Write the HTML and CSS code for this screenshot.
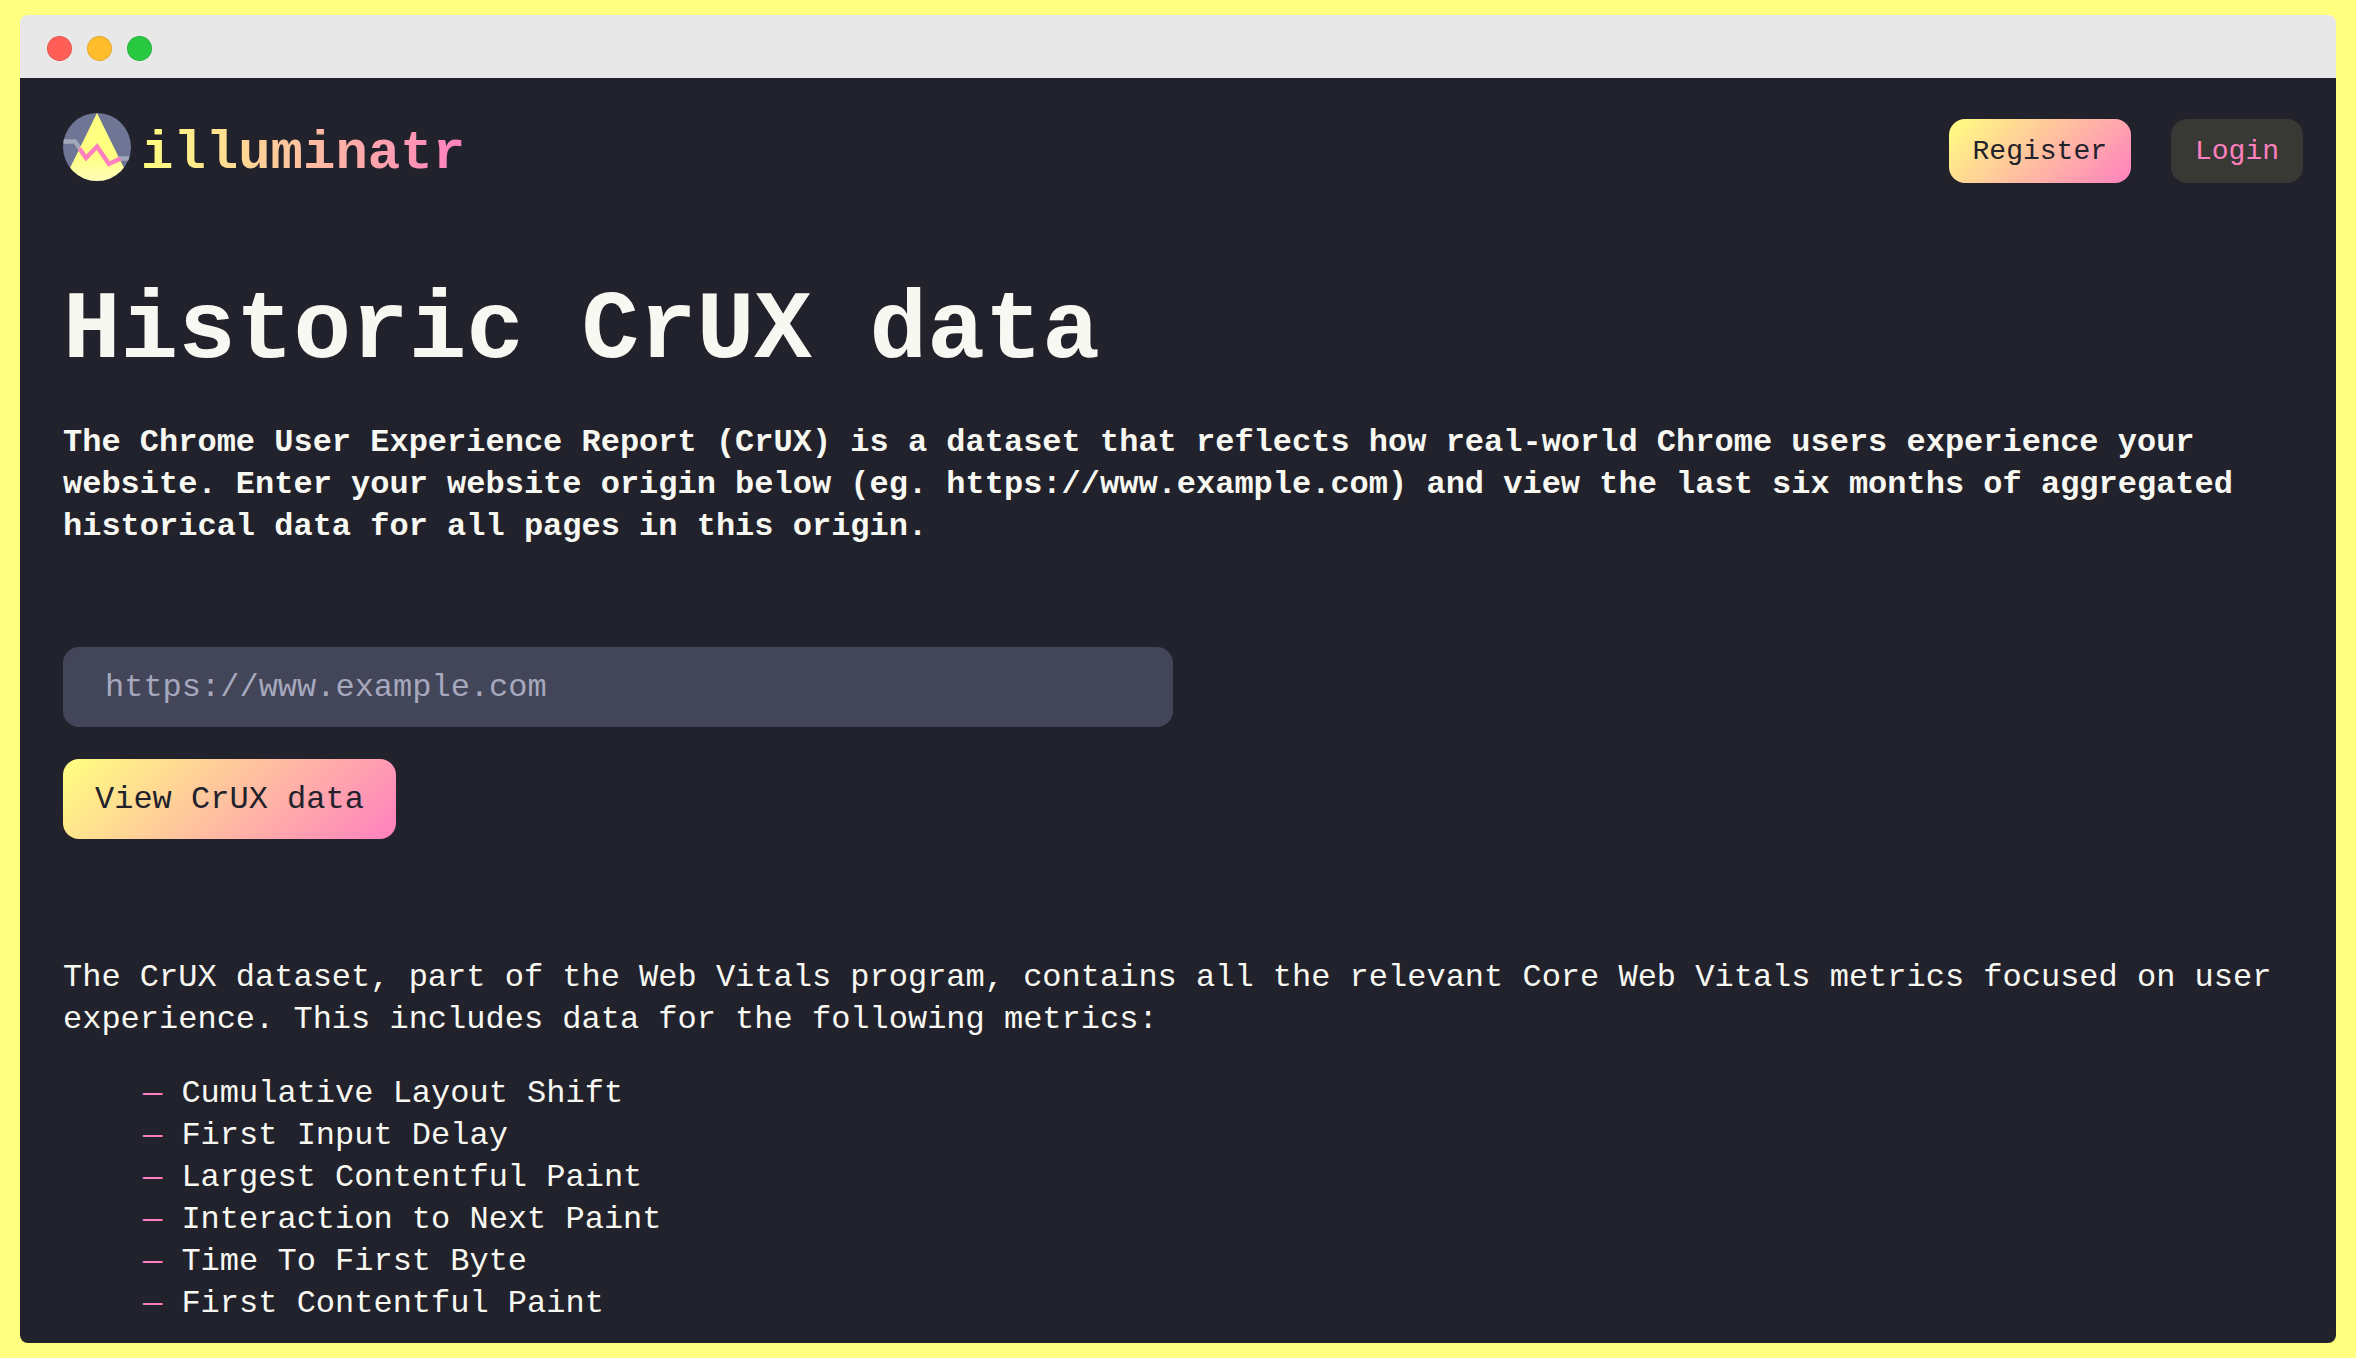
FILE: index.html
```
<!DOCTYPE html>
<html lang="en">
	<head>
		<meta charset="utf-8">
		<meta name="viewport" content="width=device-width, initial-scale=1">
		<title>illuminatr</title>
		<link rel="stylesheet" href="styles.css">
	</head>

	<body>
		<div class="window">
			<div class="titlebar">
				<span class="dot red"></span>
				<span class="dot orange"></span>
				<span class="dot green"></span>
			</div>

			<div class="page">
				<header class="header">
					<a class="brand" href="#">
						<svg class="logo" viewBox="0 0 68 68" aria-hidden="true">
							<defs>
								<clipPath id="disc"><circle cx="34" cy="34" r="34"/></clipPath>
								<linearGradient id="beam" x1="0" y1="0" x2="0" y2="1">
									<stop offset="0.6" stop-color="#ffff80"/>
									<stop offset="1" stop-color="#ffffb8"/>
								</linearGradient>
							</defs>
							<g clip-path="url(#disc)" fill="none" stroke-width="4.5">
								<rect width="68" height="68" fill="#6f7594"/>
								<path d="M0 28.5H12L18 37M56 45.5H68" stroke="#a3a7ba"/>
								<path d="M34 0L67.4 68H.6z" fill="url(#beam)"/>
								<path d="M16.5 35.5L23 45L34 33.5L46 51L57.5 45.5" stroke="#ff80bf"/>
							</g>
						</svg>
						<span class="name">illuminatr</span>
					</a>
					<nav class="nav">
						<a class="btn primary" href="#">Register</a>
						<a class="btn login" href="#">Login</a>
					</nav>
				</header>

				<main>
					<h1>Historic CrUX data</h1>
					<p class="intro">The Chrome User Experience Report (CrUX) is a dataset that reflects how real-world Chrome users experience your website. Enter your website origin below (eg. https://www.example.com) and view the last six months of aggregated historical data for all pages in this origin.</p>

					<form class="search">
						<input type="url" name="origin" placeholder="https://www.example.com" aria-label="Website origin">
						<button class="primary" type="submit">View CrUX data</button>
					</form>

					<p>The CrUX dataset, part of the Web Vitals program, contains all the relevant Core Web Vitals metrics focused on user experience. This includes data for the following metrics:</p>
					<ul class="metrics">
						<li>Cumulative Layout Shift</li>
						<li>First Input Delay</li>
						<li>Largest Contentful Paint</li>
						<li>Interaction to Next Paint</li>
						<li>Time To First Byte</li>
						<li>First Contentful Paint</li>
					</ul>
				</main>
			</div>
		</div>
	</body>
</html>
```
FILE: styles.css
```
*{
	box-sizing:border-box;
}
body{
	margin:0;
	padding:15px 20px;
	background-color:#ffff80;
	color:#f8f8f2;
	font-family:"Liberation Mono", monospace;
	font-size:32px;
	line-height:42px;
}

/* browser chrome */
.titlebar{
	display:flex;
	align-items:center;
	gap:15px;
	height:63px;
	padding:3px 27px 0;
	border-radius:8px 8px 0 0;
	background-color:#e8e8e8;
}
.dot{
	width:25px;
	height:25px;
	border-radius:50%;
	border:1px solid rgba(0,0,0,0.1);
}
.red{
	background-color:#ff5f57;
}
.orange{
	background-color:#ffbd2e;
}
.green{
	background-color:#28c940;
}

.page{
	padding:35px 33px 18px 43px;
	border-radius:0 0 8px 8px;
	background-color:#22222c;
}
.header{
	display:flex;
	justify-content:space-between;
	align-items:flex-start;
}
.brand{
	display:flex;
	align-items:flex-start;
	gap:10px;
	text-decoration:none;
}
.logo{
	width:68px;
	height:68px;
}
.name{
	font-size:54px;
	font-weight:bold;
	line-height:82px;
	color:transparent;
	background:linear-gradient(90deg, #ffff80, #ff80bf);
	-webkit-background-clip:text;
	background-clip:text;
}
.nav{
	display:flex;
	gap:40px;
	padding-top:6px;
}
.btn{
	padding:2px 24px 0;
	border-radius:16px;
	font-size:28px;
	line-height:62px;
	text-decoration:none;
}
.primary{
	color:#22222c;
	background:linear-gradient(135deg, #ffff80, #ff80bf);
}
.login{
	color:#ff80bf;
	background-color:#383834;
}

h1{
	margin:81px 0 34px;
	font-size:96px;
	line-height:112px;
}
p{
	margin:0;
}
.intro{
	font-weight:bold;
}

.search{
	display:flex;
	flex-direction:column;
	align-items:flex-start;
	gap:32px;
	margin:99px 0 118px;
}
.search input,
.search button{
	height:80px;
	border:0;
	border-radius:16px;
	font:inherit;
}
.search input{
	width:100%;
	max-width:1110px;
	padding:0 42px;
	color:#f8f8f2;
	background-color:#434558;
}
.search input::placeholder{
	color:#a6a8bd;
	opacity:1;
}
.search button{
	padding:2px 32px 0;
	cursor:pointer;
}

.metrics{
	margin:32px 0 0;
	padding-left:80px;
	list-style:none;
}
.metrics li::before{
	content:"— ";
	color:#ff80bf;
}
```
